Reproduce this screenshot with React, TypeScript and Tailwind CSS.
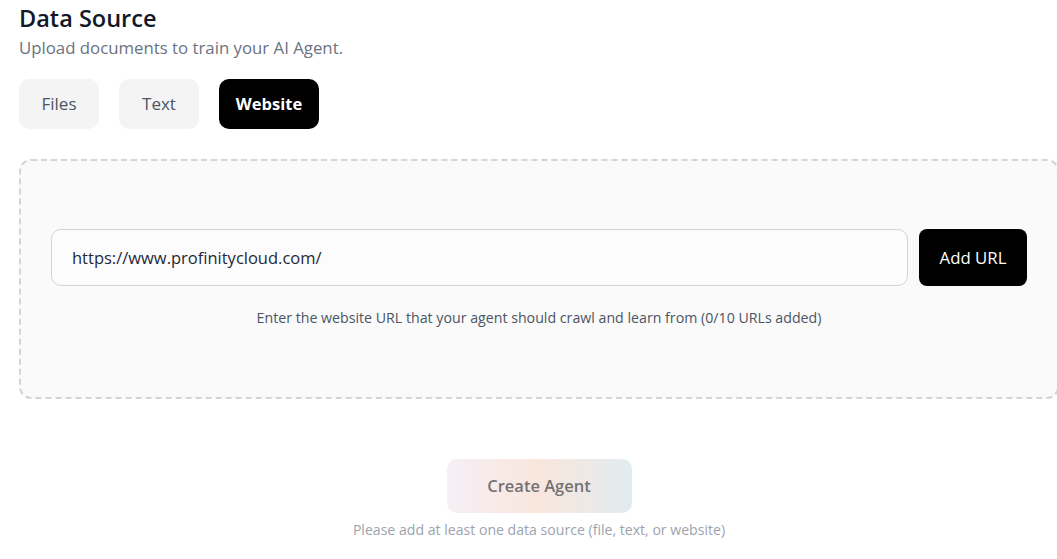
export default function App() {
  return (
    <div className="min-h-screen w-full overflow-hidden bg-white font-['Segoe_UI','Open_Sans',sans-serif] text-[#111827]">
      <div className="ml-[19px] pt-[3px] w-[1040px]">
        {/* Header */}
        <h1 className="text-[23.5px] leading-[30px] font-semibold">Data Source</h1>
        <p className="text-[16.8px] leading-[24px] text-[#6b7280] mt-[3px]">
          Upload documents to train your AI Agent.
        </p>

        {/* Tabs */}
        <div className="flex gap-5 mt-[19px]">
          <button className="w-[80px] h-[50px] rounded-[10px] bg-[#f4f4f5] text-[17px] text-[#4b5563]">
            Files
          </button>
          <button className="w-[80px] h-[50px] rounded-[10px] bg-[#f4f4f5] text-[17px] text-[#4b5563]">
            Text
          </button>
          <button className="w-[100px] h-[50px] rounded-[10px] bg-black text-[16.5px] font-bold text-white">
            Website
          </button>
        </div>

        {/* Website panel */}
        <div className="mt-[30px] h-[240px] rounded-[12px] border-2 border-dashed border-[#d4d4d8] bg-[#fafafa] px-[30px] flex flex-col justify-center">
          <div className="flex gap-[11px]">
            <input
              type="text"
              defaultValue="https://www.profinitycloud.com/"
              className="flex-1 h-[57px] rounded-[10px] border border-[#d1d5db] bg-[#fcfcfd] px-[20px] text-[16.5px] text-[#1f2937] outline-none"
            />
            <button className="w-[108px] h-[57px] rounded-[8px] bg-black text-white text-[16.8px]">
              Add URL
            </button>
          </div>
          <p className="mt-[21px] text-center text-[14.2px] text-[#4b5563]">
            Enter the website URL that your agent should crawl and learn from (0/10 URLs added)
          </p>
        </div>

        {/* Footer */}
        <div className="mt-[60px] flex flex-col items-center">
          <button className="w-[185px] h-[54px] rounded-[10px] bg-gradient-to-r from-[#f6eff5] via-[#f9e6dd] to-[#e0ecef] text-[16.5px] font-semibold text-[#737373]">
            Create Agent
          </button>
          <p className="mt-[6px] text-[14.1px] text-[#9ca3af]">
            Please add at least one data source (file, text, or website)
          </p>
        </div>
      </div>
    </div>
  );
}
